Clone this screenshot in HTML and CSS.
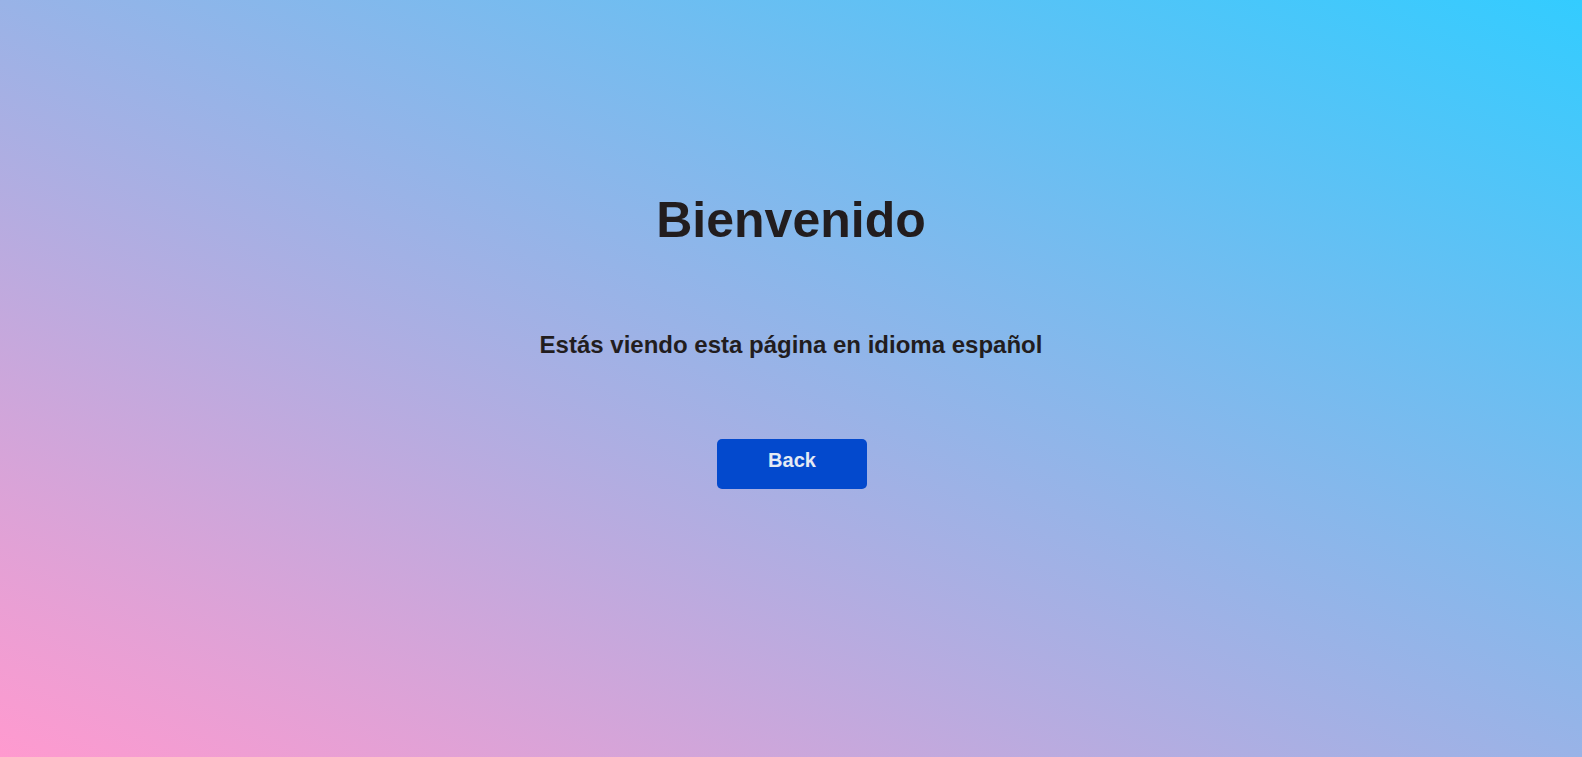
FILE: index.html
```html
<!DOCTYPE html>
<html lang="es">
<head>
<meta charset="utf-8">
<title>Bienvenido</title>
<link rel="stylesheet" href="styles.css">
</head>
<body>
<main class="page">
  <h1 class="title">Bienvenido</h1>
  <p class="subtitle">Estás viendo esta página en idioma español</p>
  <button class="back-btn" type="button">Back</button>
</main>
</body>
</html>
```

FILE: styles.css
```css
html, body {
  margin: 0;
  padding: 0;
  height: 100%;
}

body {
  background: linear-gradient(to top right, #ff9acf 0%, #33ccff 100%);
  font-family: "Liberation Sans", Arial, sans-serif;
  color: #221d1e;
}

.page {
  display: flex;
  flex-direction: column;
  align-items: center;
  padding-top: 192px;
}

.title {
  margin: 0;
  font-size: 50px;
  line-height: 56px;
  font-weight: bold;
}

.subtitle {
  margin: 83px 0 0;
  font-size: 24px;
  line-height: 28px;
  font-weight: bold;
}

.back-btn {
  margin: 80px 0 0 2px;
  width: 150px;
  height: 50px;
  padding: 9px 0 17px;
  box-sizing: border-box;
  border: none;
  border-radius: 5px;
  background: #0349cd;
  color: #e4eaf4;
  font-family: "Liberation Sans", Arial, sans-serif;
  font-size: 20px;
  line-height: 24px;
  font-weight: bold;
  cursor: pointer;
}
```
